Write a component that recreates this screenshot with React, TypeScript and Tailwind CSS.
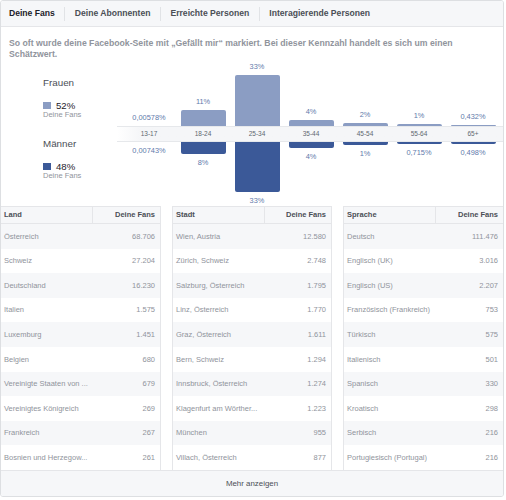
import React from "react";

const cols = [
  { label: "13-17", top: "0,00578%", topH: 0, bot: "0,00743%", botH: 0 },
  { label: "18-24", top: "11%", topH: 16, bot: "8%", botH: 12 },
  { label: "25-34", top: "33%", topH: 51, bot: "33%", botH: 50 },
  { label: "35-44", top: "4%", topH: 6, bot: "4%", botH: 6 },
  { label: "45-54", top: "2%", topH: 3, bot: "1%", botH: 2.5 },
  { label: "55-64", top: "1%", topH: 2, bot: "0,715%", botH: 2 },
  { label: "65+", top: "0,432%", topH: 1.5, bot: "0,498%", botH: 2 },
];

const tables = [
  {
    head: "Land",
    rows: [
      ["Österreich", "68.706"],
      ["Schweiz", "27.204"],
      ["Deutschland", "16.230"],
      ["Italien", "1.575"],
      ["Luxemburg", "1.451"],
      ["Belgien", "680"],
      ["Vereinigte Staaten von ...", "679"],
      ["Vereinigtes Königreich", "269"],
      ["Frankreich", "267"],
      ["Bosnien und Herzegow...", "261"],
    ],
    cls: "border-r",
  },
  {
    head: "Stadt",
    rows: [
      ["Wien, Austria", "12.580"],
      ["Zürich, Schweiz", "2.748"],
      ["Salzburg, Österreich", "1.795"],
      ["Linz, Österreich", "1.770"],
      ["Graz, Österreich", "1.611"],
      ["Bern, Schweiz", "1.294"],
      ["Innsbruck, Österreich", "1.274"],
      ["Klagenfurt am Wörther...", "1.223"],
      ["München", "955"],
      ["Villach, Österreich", "877"],
    ],
    cls: "border-x",
  },
  {
    head: "Sprache",
    rows: [
      ["Deutsch", "111.476"],
      ["Englisch (UK)", "3.016"],
      ["Englisch (US)", "2.207"],
      ["Französisch (Frankreich)", "753"],
      ["Türkisch", "575"],
      ["Italienisch", "501"],
      ["Spanisch", "330"],
      ["Kroatisch", "298"],
      ["Serbisch", "216"],
      ["Portugiesisch (Portugal)", "216"],
    ],
    cls: "border-l",
  },
];

const tabs = ["Deine Fans", "Deine Abonnenten", "Erreichte Personen", "Interagierende Personen"];

export default function App() {
  return (
    <div className="w-[506px] h-[500px] bg-white" style={{ fontFamily: '"Liberation Sans", Arial, sans-serif' }}>
      <div className="w-[504px] h-[497px] border border-[#dddfe2] rounded-[3px] overflow-hidden flex flex-col">
        {/* Tabs */}
        <div className="h-[26px] shrink-0 bg-[#f6f7f9] border-b border-[#e5e6e9] flex items-center pl-[8px]">
          {tabs.map((t, i) => (
            <React.Fragment key={t}>
              {i > 0 && <div className="w-px h-[14px] bg-[#e1e3e6] mx-[9.5px]" />}
              <span
                className={
                  "text-[8.6px] font-bold leading-[11px] " + (i === 0 ? "text-[#1d2129]" : "text-[#4b4f56]")
                }
              >
                {t}
              </span>
            </React.Fragment>
          ))}
        </div>

        {/* Description */}
        <div className="pl-[8px] pr-[40px] pt-[11px] text-[8.7px] leading-[10.5px] font-bold text-[#90949c]">
          So oft wurde deine Facebook-Seite mit „Gefällt mir“ markiert. Bei dieser Kennzahl handelt es sich um einen
          Schätzwert.
        </div>

        {/* Chart */}
        <div className="flex h-[146px] shrink-0 mt-[1px]">
          <div className="w-[116px] shrink-0 pl-[42px] pt-[17px] text-[#4b4f56]">
            <div className="text-[9.8px] leading-[12px]">Frauen</div>
            <div className="flex items-center mt-[11px] h-[11px]">
              <span className="w-[8px] h-[7px] bg-[#8b9dc3] mr-[5px]" />
              <span className="text-[9.6px] leading-[11px] text-[#1d2129]">52%</span>
            </div>
            <div className="text-[7.5px] leading-[8px] text-[#90949c]">Deine Fans</div>
            <div className="text-[9.8px] leading-[12px] mt-[19px]">Männer</div>
            <div className="flex items-center mt-[11px] h-[11px]">
              <span className="w-[8px] h-[7px] bg-[#3b5998] mr-[5px]" />
              <span className="text-[9.6px] leading-[11px] text-[#1d2129]">48%</span>
            </div>
            <div className="text-[7.5px] leading-[8px] text-[#90949c]">Deine Fans</div>
          </div>
          <div className="flex-1 flex flex-col">
            <div className="h-[66px] flex pl-[5px]">
              {cols.map((c) => (
                <div key={c.label} className="w-[54px] flex flex-col items-center justify-end">
                  <div className="text-[7.4px] leading-[11px] text-[#6279ab] mb-[3px]">{c.top}</div>
                  <div className="w-[45px] bg-[#8b9dc3] rounded-t-[2px]" style={{ height: c.topH }} />
                </div>
              ))}
            </div>
            <div className="h-[16px] flex items-center pl-[5px] border-y border-[#e6e8eb] bg-linear-to-r from-white to-[#f5f6f8] to-[6%]">
              {cols.map((c) => (
                <div key={c.label} className="w-[54px] text-center text-[6.5px] leading-[14px] text-[#606770]">
                  {c.label}
                </div>
              ))}
            </div>
            <div className="h-[64px] flex pl-[5px]">
              {cols.map((c) => (
                <div key={c.label} className="w-[54px] flex flex-col items-center justify-start">
                  <div className="w-[45px] bg-[#3b5998] rounded-b-[2px]" style={{ height: c.botH }} />
                  <div className="text-[7.4px] leading-[11px] text-[#6279ab] mt-[3px]">{c.bot}</div>
                </div>
              ))}
            </div>
          </div>
        </div>

        {/* Tables */}
        <div className="grid grid-cols-3 gap-[11px]">
          {tables.map((t) => (
            <div key={t.head} className={"border-[#e5e6e9] " + t.cls}>
              <div className="h-[18px] flex bg-[#f6f7f9] border-y border-[#e5e6e9] text-[7.5px] font-bold text-[#4b4f56]">
                <div className="w-[92px] border-r border-[#e5e6e9] pl-[3px] flex items-center">{t.head}</div>
                <div className="flex-1 flex items-center justify-end pr-[5px]">Deine Fans</div>
              </div>
              {t.rows.map((r, i) => (
                <div
                  key={i}
                  className={
                    "h-[24.6px] flex items-center justify-between pl-[3px] pr-[5px] text-[7.5px] text-[#90949c] " +
                    (i % 2 === 0 ? "bg-[#f6f7f9]" : "bg-white")
                  }
                >
                  <span className="whitespace-nowrap">{r[0]}</span>
                  <span>{r[1]}</span>
                </div>
              ))}
            </div>
          ))}
        </div>

        {/* Footer */}
        <div className="flex-1 border-t border-[#e5e6e9] bg-[#f6f7f9] flex items-center justify-center text-[7.9px] text-[#4b4f56]">
          Mehr anzeigen
        </div>
      </div>
    </div>
  );
}
